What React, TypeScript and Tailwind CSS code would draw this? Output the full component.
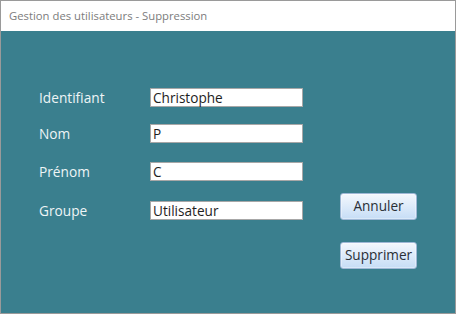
import React from "react";

const font = { fontFamily: '"Open Sans", "Noto Sans", sans-serif' };

function Row({ label, value, mt }: { label: string; value: string; mt: string }) {
  return (
    <div className={`flex items-center ${mt}`}>
      <div className="w-[111px] text-[13.7px] leading-[19px] text-[#eef5f6]">{label}</div>
      <div className="w-[153px] h-[19px] bg-white border border-[#a7a7a7] pl-[2px] text-[13.6px] leading-[17px] text-[#1e1e1e]">
        {value}
      </div>
    </div>
  );
}

function Btn({ children, mt }: { children: React.ReactNode; mt: string }) {
  return (
    <div
      className={`w-[77px] h-[27px] ${mt} rounded-[3px] border border-[#9fb8d6] bg-gradient-to-b from-[#f4f8fd] to-[#c6ddf6] flex items-center justify-center text-[13.6px] text-[#2a2f36] shadow-[0_0_0_1px_rgba(255,255,255,0.35)_inset]`}
    >
      {children}
    </div>
  );
}

export default function App() {
  return (
    <div style={font} className="w-[456px] h-[314px] flex flex-col border border-[#9a9a9a] bg-[#3a7f8e] overflow-hidden">
      <div className="h-[30px] bg-white shrink-0 flex items-center pl-[8px] text-[11.3px] text-[#7c7c7c]">
        Gestion des utilisateurs - Suppression
      </div>
      <div className="flex flex-1">
        <div className="pl-[38px] pt-[57px] flex flex-col">
          <Row label="Identifiant" value="Christophe" mt="" />
          <Row label="Nom" value="P" mt="mt-[17px]" />
          <Row label="Prénom" value="C" mt="mt-[19px]" />
          <Row label="Groupe" value="Utilisateur" mt="mt-[20px]" />
        </div>
        <div className="pl-[37px] pt-[162px] flex flex-col">
          <Btn mt="">Annuler</Btn>
          <Btn mt="mt-[22px]">Supprimer</Btn>
        </div>
      </div>
    </div>
  );
}
